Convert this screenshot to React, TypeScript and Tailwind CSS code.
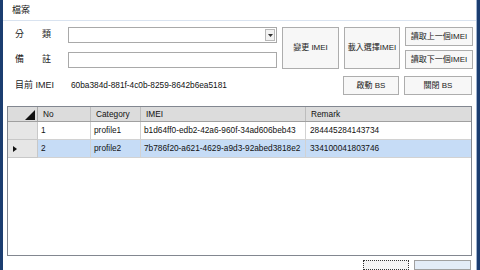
import React from "react";

const cjk = { fontFamily: '"Liberation Sans", "Noto Sans CJK TC", sans-serif' };

function Btn({ children, className }: { children: React.ReactNode; className: string }) {
  return (
    <div
      className={
        "flex items-center justify-center border border-[#adadad] bg-[#f7f7f7] text-[8px] text-[#222] leading-none " +
        className
      }
    >
      {children}
    </div>
  );
}

export default function App() {
  const rows = [
    { no: "1", cat: "profile1", imei: "b1d64ff0-edb2-42a6-960f-34ad606beb43", remark: "284445284143734", sel: false },
    { no: "2", cat: "profile2", imei: "7b786f20-a621-4629-a9d3-92abed3818e2", remark: "334100041803746", sel: true },
  ];
  return (
    <div className="w-[480px] h-[270px] overflow-hidden flex bg-white" style={cjk}>
      <div className="w-[3px] h-full bg-[#1b3d70]" />
      <div className="flex-1 flex flex-col">
        {/* menu bar */}
        <div className="h-[22px] border-b border-[#d9e3f0] flex items-start pl-[9px] pt-[5px] text-[9px] leading-[11px] text-[#222]">
          檔案
        </div>
        {/* form */}
        <div className="flex pl-[9px] pt-[6px]">
          <div className="w-[265px] flex flex-col">
            <div className="flex items-center h-[16px]">
              <div className="w-[56px] pl-[3px]">
                <div className="w-[36px] flex justify-between text-[9px] text-[#222]">
                  <span>分</span>
                  <span>類</span>
                </div>
              </div>
              <div className="w-[209px] h-[16px] border border-[#a9a9a9] bg-white flex justify-end items-center pr-[1px]">
                <div className="w-[10px] h-[12px] border border-[#b8b8b8] bg-[#f2f2f2] flex items-center justify-center">
                  <svg width="5" height="3" viewBox="0 0 5 3">
                    <path d="M0 0 L5 0 L2.5 3 Z" fill="#333" />
                  </svg>
                </div>
              </div>
            </div>
            <div className="flex items-center h-[16px] mt-[9px]">
              <div className="w-[56px] pl-[3px]">
                <div className="w-[36px] flex justify-between text-[9px] text-[#222]">
                  <span>備</span>
                  <span>註</span>
                </div>
              </div>
              <div className="w-[209px] h-[16px] border border-[#a9a9a9] bg-white" />
            </div>
          </div>
          <Btn className="ml-[5px] w-[57px] h-[42px]">變更 IMEI</Btn>
          <Btn className="ml-[5px] w-[56px] h-[42px]">載入選擇IMEI</Btn>
          <div className="ml-[5px] w-[68px] flex flex-col gap-[4px]">
            <Btn className="h-[19px]">讀取上一個IMEI</Btn>
            <Btn className="h-[19px]">讀取下一個IMEI</Btn>
          </div>
        </div>
        <div className="flex pl-[9px] mt-[7px] h-[19px] items-center">
          <div className="w-[56px] pl-[3px] text-[9px] text-[#222]">目前 IMEI</div>
          <div className="w-[275px] pl-[3px] text-[8.3px] text-[#111]">60ba384d-881f-4c0b-8259-8642b6ea5181</div>
          <Btn className="w-[56px] h-[19px]">啟動 BS</Btn>
          <Btn className="ml-[5px] w-[68px] h-[19px]">關閉 BS</Btn>
        </div>
        {/* grid */}
        <div className="ml-[4px] mt-[11px] w-[465px] h-[158px] border border-[#828790] bg-white text-[8.3px] text-[#111]">
          <div className="flex h-[15px] bg-[#dcdcdc] border-b border-[#a0a0a0]">
            <div className="w-[30px] border-r border-[#a8a8a8] flex items-end justify-end pr-[2px] pb-[1px]">
              <svg width="10" height="10" viewBox="0 0 10 10">
                <path d="M10 0 L10 10 L0 10 Z" fill="#111" />
              </svg>
            </div>
            <div className="w-[53px] border-r border-[#bdbdbd] flex items-center pl-[5px]">No</div>
            <div className="w-[50px] border-r border-[#bdbdbd] flex items-center pl-[5px]">Category</div>
            <div className="w-[165px] border-r border-[#bdbdbd] flex items-center pl-[5px]">IMEI</div>
            <div className="flex-1 flex items-center pl-[5px]">Remark</div>
          </div>
          {rows.map((r) => (
            <div key={r.no} className="flex h-[18px]">
              <div className="w-[30px] bg-[#e6e6e6] border-r border-b border-[#c8c8c8] flex items-center pl-[5px]">
                {r.sel && (
                  <svg width="4" height="6" viewBox="0 0 4 6">
                    <path d="M0 0 L4 3 L0 6 Z" fill="#111" />
                  </svg>
                )}
              </div>
              <div className={"flex flex-1 " + (r.sel ? "bg-[#c6dcf6]" : "bg-white")}>
                <div className="w-[53px] border-r border-b border-[#d2d2d2] flex items-center pl-[3px]">{r.no}</div>
                <div className="w-[50px] border-r border-b border-[#d2d2d2] flex items-center pl-[3px]">{r.cat}</div>
                <div className="w-[165px] border-r border-b border-[#d2d2d2] flex items-center pl-[3px] whitespace-nowrap overflow-hidden">
                  {r.imei}
                </div>
                <div className="flex-1 border-b border-[#d2d2d2] flex items-center pl-[4px]">{r.remark}</div>
              </div>
            </div>
          ))}
        </div>
        <div className="flex justify-end pr-[5px] mt-[4px] gap-[5px]">
          <div className="w-[46px] h-[10px] border border-dotted border-[#333] bg-[#f4f4f4]" />
          <div className="w-[57px] h-[10px] border border-[#a0a0a0] bg-[#e3ecf7]" />
        </div>
      </div>
      <div className="w-[4px] h-full bg-[#1b3d70] border-l border-[#9fb3cf]" />
    </div>
  );
}
